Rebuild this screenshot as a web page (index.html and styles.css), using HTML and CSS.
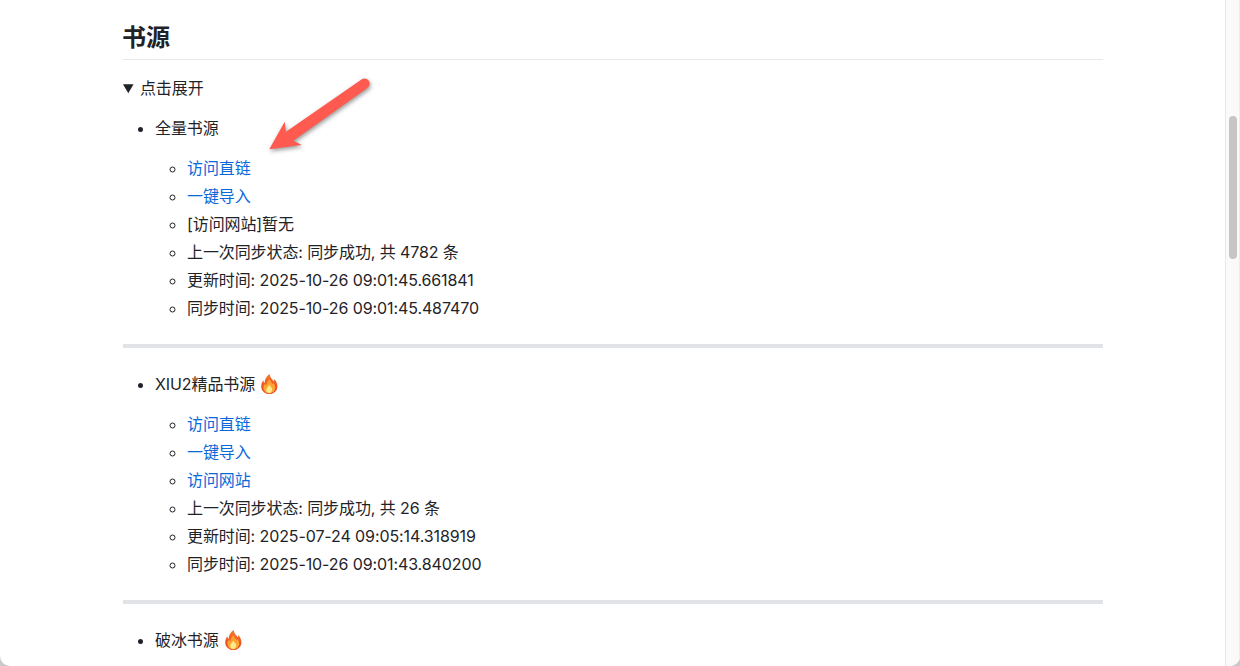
FILE: index.html
```html
<!DOCTYPE html>
<html lang="zh-CN">

<head>
    <meta charset="UTF-8">
    <meta name="viewport" content="width=device-width, initial-scale=1.0">
    <title>书源</title>
    <link rel="stylesheet" href="styles.css">
</head>

<body>
    <svg width="0" height="0" class="defs">
        <defs>
            <linearGradient id="flame-outer" x1="0" y1="0" x2="0" y2="1">
                <stop offset="0" stop-color="#f57a2c" />
                <stop offset="1" stop-color="#e9401f" />
            </linearGradient>
            <linearGradient id="flame-mid" x1="0" y1="0" x2="0" y2="1">
                <stop offset="0" stop-color="#fb9a2e" />
                <stop offset="1" stop-color="#fbb03a" />
            </linearGradient>
            <symbol id="fire" viewBox="0 0 20 20">
                <path fill="url(#flame-outer)" d="M10.6 0C11 3.2 13 4.8 14.6 7.2C15.1 6.6 15.3 5.9 15.2 5C17.4 7.3 18.4 9.6 18.4 12.2C18.4 16.8 14.8 20 10.4 20C5.8 20 2.2 16.8 2.2 12.2C2.2 9.8 3.1 7.9 4.4 6.2C4.4 7.4 4.8 8.4 5.6 9.1C5.4 5.4 7.6 2.2 10.6 0Z" />
                <path fill="url(#flame-mid)" d="M10.8 5C11 7.2 12.6 8.2 13.6 10C14 9.6 14.2 9.2 14.2 8.7C15.6 10.4 16.2 12 16.2 13.6C16.2 16.9 13.6 19.4 10.4 19.4C7.2 19.4 4.4 16.9 4.4 13.8C4.4 12.2 5.2 10.9 6.2 9.8C6.4 10.6 6.8 11.2 7.4 11.5C7.4 9 8.8 6.6 10.8 5Z" />
                <path fill="#ffeb8c" d="M10.4 10.4C10.8 12 12 12.6 12.8 14C13.6 15.9 12.6 19 10.2 19C8 19 6.9 16.6 7.6 14.6C8 13.4 9.6 12.2 10.4 10.4Z" />
            </symbol>
        </defs>
    </svg>

    <div class="window">
        <main class="page">
            <article class="markdown">
                <h2>书源</h2>
                <details open>
                    <summary>点击展开</summary>

                    <ul>
                        <li>
                            <p>全量书源</p>
                            <ul>
                                <li><a href="#">访问直链</a></li>
                                <li><a href="#">一键导入</a></li>
                                <li>[访问网站]暂无</li>
                                <li>上一次同步状态: 同步成功, 共 4782 条</li>
                                <li>更新时间: 2025-10-26 09:01:45.661841</li>
                                <li>同步时间: 2025-10-26 09:01:45.487470</li>
                            </ul>
                        </li>
                    </ul>
                    <hr>

                    <ul>
                        <li>
                            <p>XIU2精品书源 <svg class="emoji"><use href="#fire" /></svg></p>
                            <ul>
                                <li><a href="#">访问直链</a></li>
                                <li><a href="#">一键导入</a></li>
                                <li><a href="#">访问网站</a></li>
                                <li>上一次同步状态: 同步成功, 共 26 条</li>
                                <li>更新时间: 2025-07-24 09:05:14.318919</li>
                                <li>同步时间: 2025-10-26 09:01:43.840200</li>
                            </ul>
                        </li>
                    </ul>
                    <hr>

                    <ul>
                        <li>
                            <p>破冰书源 <svg class="emoji"><use href="#fire" /></svg></p>
                        </li>
                    </ul>
                </details>
            </article>

            <!-- 标注箭头 -->
            <svg class="arrow" width="120" height="90" viewBox="0 0 120 90">
                <path fill="#ff5a4f" d="M104.5 2.5C107 0.8 110.5 1.5 112 4C113.3 6.5 112.5 9.6 110 11.3L36.3 63.7L44.7 68L12.3 72.3L27.7 44.7L29 54.7Z" />
            </svg>
        </main>

        <aside class="scrollbar">
            <div class="thumb"></div>
        </aside>
    </div>
</body>

</html>
```

FILE: styles.css
```css
* {
    box-sizing: border-box;
}

html,
body {
    width: 100%;
    height: 100%;
    margin: 0;
    overflow: hidden;
    background: #c9c9c9;
}

.defs {
    position: absolute;
}

.window {
    display: flex;
    height: 666px;
    overflow: hidden;
    background: #fff;
    border-radius: 0 0 10px 10px;
}

.page {
    position: relative;
    flex: 1;
    min-width: 0;
    padding: 22px 122px 0 123px;
    overflow: hidden;
}

.markdown {
    font-family: Inter, "Noto Sans CJK SC", sans-serif;
    font-size: 16px;
    line-height: 1.5;
    letter-spacing: -0.1px;
    color: #1f2328;
}

.markdown h2 {
    margin: 0 0 16px;
    padding: 1px 0 6.2px;
    font-size: 24px;
    font-weight: 600;
    line-height: 1.25;
    letter-spacing: 0;
    text-indent: -1px;
    border-bottom: 1px solid #e6e8eb;
}

.markdown p {
    margin: 0 0 16px;
}

.markdown ul {
    margin: 16px 0;
    padding-left: 32px;
    list-style: disc;
}

.markdown ul ul {
    margin: 0;
    list-style: circle;
}

.markdown ul ul li + li {
    margin-top: 4px;
}

.markdown a {
    color: #0969da;
    text-decoration: none;
}

.markdown hr {
    height: 4px;
    margin: 24px 0;
    border: 0;
    background: #e1e3e8;
}

.emoji {
    width: 20px;
    height: 20px;
    vertical-align: -4px;
}

.arrow {
    position: absolute;
    left: 257px;
    top: 77px;
    overflow: visible;
    filter: drop-shadow(1px 2px 2px rgba(50, 50, 50, 0.5));
}

.scrollbar {
    flex: none;
    width: 15px;
    padding: 116px 2px 0 3px;
    background: #fafafa;
    border-left: 1px solid #e8e8e8;
    border-right: 1px solid #ececec;
}

.thumb {
    width: 8px;
    height: 143px;
    border-radius: 4px;
    background: #c6c6c6;
}
```
